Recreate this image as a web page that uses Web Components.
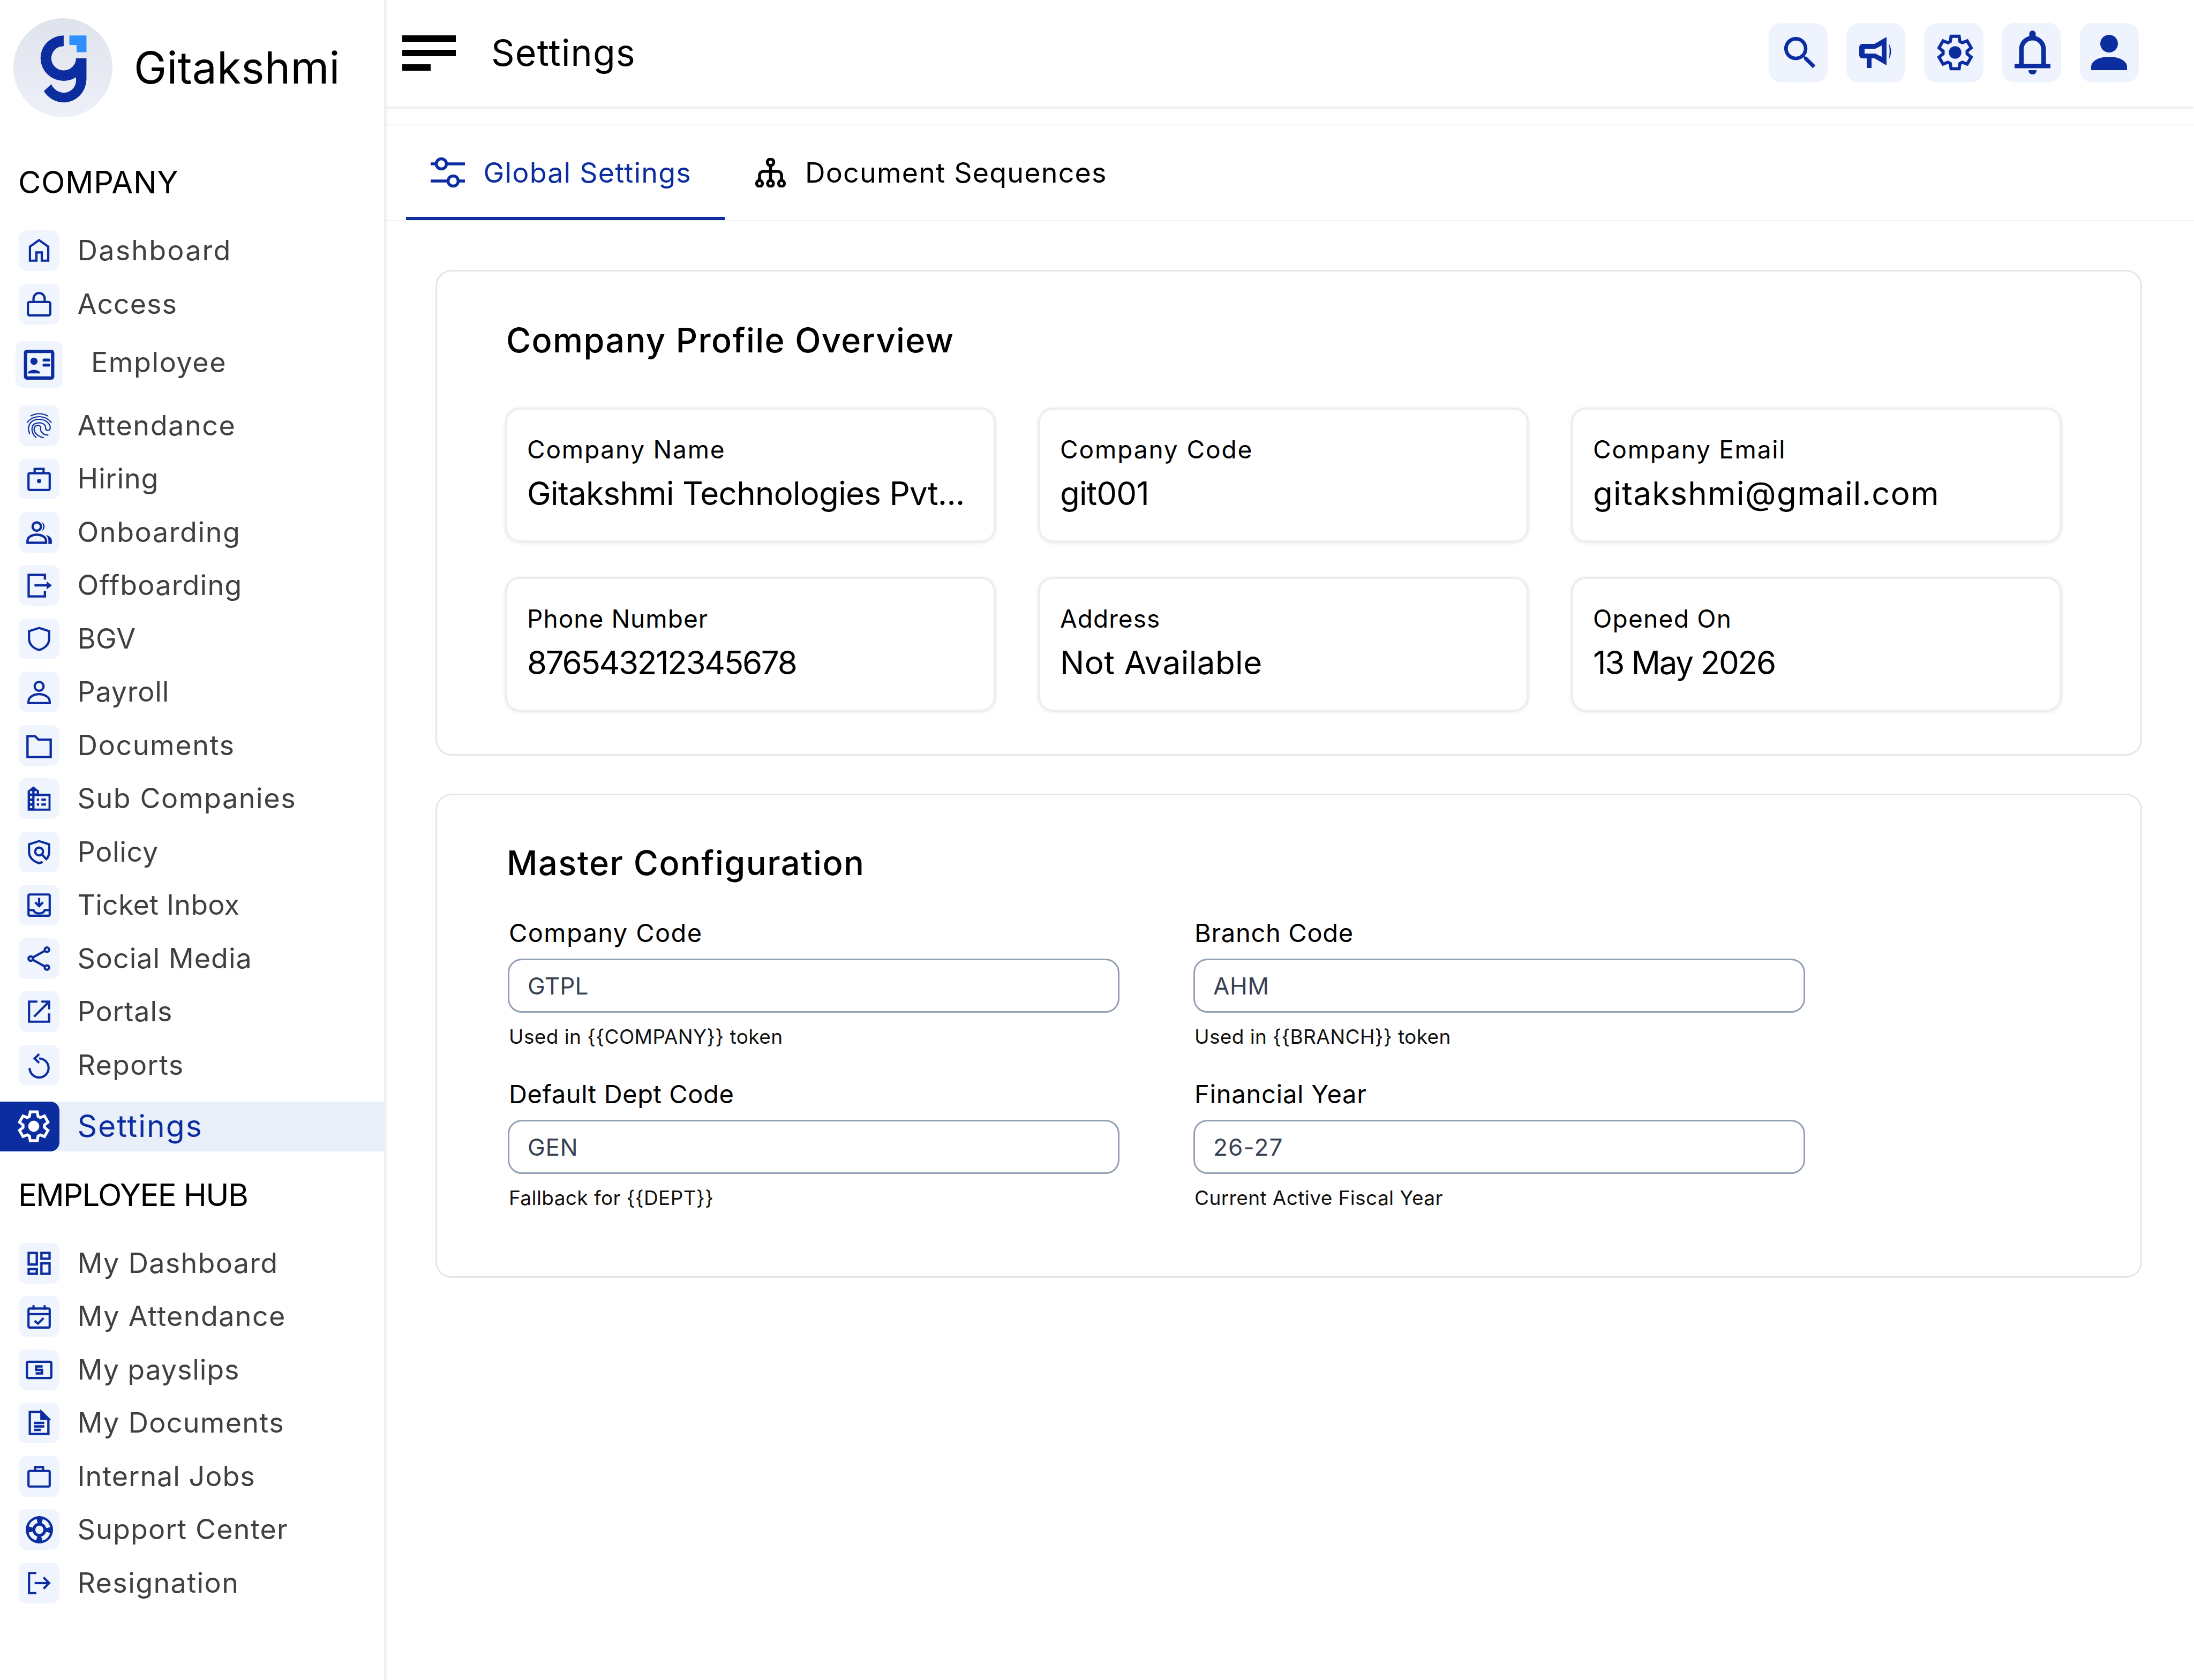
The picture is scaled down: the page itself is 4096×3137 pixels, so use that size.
<!DOCTYPE html>
<html lang="en">
<head>
<meta charset="utf-8">
<title>Settings</title>
<style>
  html, body { margin: 0; height: 100%; background: #fff; overflow: hidden; }
  body { font-family: Inter, "Liberation Sans", sans-serif; color: #000; }
</style>
</head>
<body>
<gt-app>
  <gt-sidebar slot="side">
    <gt-nav-section style="--ls:.6px">COMPANY</gt-nav-section>
    <gt-nav-item icon="home" style="--ls:2.2px">Dashboard</gt-nav-item>
    <gt-nav-item icon="lock" style="--ls:1px">Access</gt-nav-item>
    <gt-nav-item icon="idcard" wide>Employee</gt-nav-item>
    <gt-nav-item icon="fingerprint">Attendance</gt-nav-item>
    <gt-nav-item icon="hiring" style="--ls:.8px">Hiring</gt-nav-item>
    <gt-nav-item icon="people" size="52">Onboarding</gt-nav-item>
    <gt-nav-item icon="offboard" size="52" style="--ls:1.2px">Offboarding</gt-nav-item>
    <gt-nav-item icon="shield" style="--ls:.6px">BGV</gt-nav-item>
    <gt-nav-item icon="person" style="--ls:.8px">Payroll</gt-nav-item>
    <gt-nav-item icon="folder" size="52">Documents</gt-nav-item>
    <gt-nav-item icon="building">Sub Companies</gt-nav-item>
    <gt-nav-item icon="policy" style="--ls:.7px">Policy</gt-nav-item>
    <gt-nav-item icon="inbox" style="--ls:.2px">Ticket Inbox</gt-nav-item>
    <gt-nav-item icon="share" style="--ls:1px">Social Media</gt-nav-item>
    <gt-nav-item icon="external" style="--ls:1px">Portals</gt-nav-item>
    <gt-nav-item icon="undo" style="--ls:1.2px">Reports</gt-nav-item>
    <gt-nav-item icon="gear" active>Settings</gt-nav-item>
    <gt-nav-section style="--ls:-1.6px">EMPLOYEE HUB</gt-nav-section>
    <gt-nav-item icon="grid" size="52" style="--ls:1.3px">My Dashboard</gt-nav-item>
    <gt-nav-item icon="calendar" style="--ls:1.4px">My Attendance</gt-nav-item>
    <gt-nav-item icon="payslip" size="52" style="--ls:.9px">My payslips</gt-nav-item>
    <gt-nav-item icon="doc" size="52" style="--ls:1.3px">My Documents</gt-nav-item>
    <gt-nav-item icon="bag" style="--ls:1px">Internal Jobs</gt-nav-item>
    <gt-nav-item icon="lifebuoy" size="51" style="--ls:1.2px">Support Center</gt-nav-item>
    <gt-nav-item icon="logout" style="--ls:1.4px">Resignation</gt-nav-item>
  </gt-sidebar>

  <gt-topbar>Settings</gt-topbar>
  <gt-tabs></gt-tabs>

  <gt-card heading="Company Profile Overview">
    <gt-tile-grid>
      <gt-info-tile label="Company Name" style="--ls:1.8px;--vls:-.7px">Gitakshmi Technologies Pvt...</gt-info-tile>
      <gt-info-tile label="Company Code" style="--ls:1.9px;--vls:-.9px">git001</gt-info-tile>
      <gt-info-tile label="Company Email" style="--ls:1.75px;--vls:1.3px">gitakshmi@gmail.com</gt-info-tile>
      <gt-info-tile label="Phone Number" style="--ls:1.05px;--vls:-2.3px">876543212345678</gt-info-tile>
      <gt-info-tile label="Address" style="--ls:1.05px;--vls:.5px">Not Available</gt-info-tile>
      <gt-info-tile label="Opened On" style="--ls:1.3px;--vls:-2.2px">13 May 2026</gt-info-tile>
    </gt-tile-grid>
  </gt-card>

  <gt-card heading="Master Configuration" config>
    <gt-field-grid>
      <gt-field label="Company Code" value="GTPL" style="--ls:1.4px;--ils:.2px">Used in {{COMPANY}} token</gt-field>
      <gt-field label="Branch Code" value="AHM" style="--ls:.7px;--ils:.6px">Used in {{BRANCH}} token</gt-field>
      <gt-field label="Default Dept Code" value="GEN" style="--ls:.6px;--ils:.6px">Fallback for {{DEPT}}</gt-field>
      <gt-field label="Financial Year" value="26-27" style="--ls:.8px;--ils:1.2px">Current Active Fiscal Year</gt-field>
    </gt-field-grid>
  </gt-card>
</gt-app>

<script>
const BLUE = "#0b2d9f";

// six flat teeth, drawn as one closed outline round the middle of the 24 box
function gearPath() {
  const pts = [];
  for (let i = 0; i < 6; i++) {
    const t = i * Math.PI / 3;
    for (const [p, a] of [[-3, 6.9], [-2.5, 10.1], [2.5, 10.1], [3, 6.9]]) {
      const x = 12 + a * Math.sin(t) + p * Math.cos(t);
      const y = 12 - a * Math.cos(t) + p * Math.sin(t);
      pts.push(x.toFixed(2) + " " + y.toFixed(2));
    }
  }
  return "M" + pts.join("L") + "Z";
}

const ICONS = {
  home: `<path d="M12 2.6 20.2 8.4V21H14.4V13.6H9.6V21H3.8V8.4Z"/>`,
  lock: `<rect x="2" y="10" width="20" height="12" rx="1.5"/><path d="M7 10V7a5 5 0 0 1 10 0v3"/>`,
  idcard: `<rect x="2.2" y="2.4" width="19.6" height="19.2" rx="1" stroke-width="2.4"/>
    <g fill="currentColor" stroke="none"><circle cx="8.3" cy="9.5" r="2.6"/><path d="M3.8 18.3c0-3.4 9-3.4 9 0z"/>
    <rect x="14.5" y="7.5" width="5.5" height="2.2" rx="1"/><rect x="14.5" y="11.2" width="5.5" height="2.2" rx="1"/></g>`,
  fingerprint: `<g transform="translate(-10.2 -12.3) scale(.1158)" stroke-width="9" stroke-linecap="round">
    <path d="M128 133Q192 100 258 133"/>
    <path d="M100 183C150 125 235 125 285 183"/>
    <path d="M118 272C95 210 125 160 192 160C250 160 278 200 278 225C278 250 245 250 243 235"/>
    <path d="M168 300C125 260 120 190 190 187C230 187 245 210 243 238"/>
    <path d="M225 302C170 290 145 250 155 225C165 200 205 205 205 225C195 250 222 282 260 282"/></g>`,
  hiring: `<rect x="2.5" y="7" width="19" height="15" rx="1"/><path d="M8 7V3.2h8V7"/><circle cx="12" cy="14" r="1.9" fill="currentColor" stroke="none"/>`,
  people: `<circle cx="10" cy="7" r="3.6"/><path d="M2 21v-1.6c0-3.5 4-5.4 8-5.4s8 1.9 8 5.4V21Z"/>
    <path d="M14 3.2a4 4 0 0 1 0 7.6c1-1 1.5-2.4 1.5-3.8S15 4.2 14 3.2z" fill="currentColor" stroke="none"/>
    <path d="M18 14.2c2.5.8 5 2.3 5 5V22h-3v-3c0-2-1-3.5-2-4.8z" fill="currentColor" stroke="none"/>`,
  offboard: `<path d="M17 7V3H3v18.5h14V17"/><path d="M8 12h11"/><path d="M18.5 8.5 23 12l-4.5 3.5z" fill="currentColor" stroke="none"/>`,
  shield: `<path d="M12 2.2 21 5v7c0 5-4 8.5-9 10-5-1.5-9-5-9-10V5Z"/>`,
  person: `<circle cx="12" cy="7" r="4"/><path d="M2.5 22v-1.5c0-4 5-6.5 9.5-6.5s9.5 2.5 9.5 6.5V22Z"/>`,
  folder: `<path d="M2 4h6.5l3 3H22v15H2Z"/>`,
  building: `<g transform="translate(-9.2 -11.9) scale(.114)" stroke="none">
    <path fill="currentColor" d="M96 305V150L141 115 186 150V172H276V305Z"/>
    <g fill="var(--tile)"><rect x="114" y="152" width="18" height="18"/><rect x="150" y="152" width="18" height="18"/><rect x="114" y="191" width="18" height="18"/><rect x="114" y="229" width="18" height="18"/><rect x="114" y="267" width="18" height="18"/><rect x="150" y="191" width="110" height="98"/></g>
    <g fill="currentColor"><rect x="168" y="210" width="18" height="18"/><rect x="204" y="210" width="36" height="18"/><rect x="168" y="248" width="18" height="18"/><rect x="204" y="248" width="36" height="18"/></g></g>`,
  policy: `<path d="M18.8 18.2C20.2 16.4 21 14.3 21 12V5l-9-2.8L3 5v7c0 5 4 8.5 9 10 1-.3 2-.7 3-1.3"/><circle cx="12" cy="11.5" r="3.5"/><path d="M14.5 14 19 19"/>`,
  inbox: `<rect x="2.5" y="2.5" width="19" height="19" rx="1"/><path d="M12 5.5v7"/><path d="M8.5 9.5 12 13l3.5-3.5"/><path d="M3 16.5h4c.6 2 2.6 3 5 3s4.4-1 5-3h4"/>`,
  share: `<circle cx="4.5" cy="12" r="2"/><circle cx="19" cy="4" r="2"/><circle cx="19" cy="20" r="2"/><path d="M6.3 11 17.2 5M6.3 13 17.2 19"/>`,
  external: `<path d="M10.5 3H3v18h18v-7.5"/><path d="M14 3h7v7"/><path d="M7.5 16.5 20.5 3.5"/>`,
  undo: `<path d="M12 6a8.5 8.5 0 1 1-8.5 8.5"/><path d="M12 2 8 6l4 4"/>`,
  gear: `<path stroke-width="1.95" d="${gearPath()}"/><circle cx="12" cy="12" r="3.9" fill="currentColor" stroke="none"/>`,
  grid: `<rect x="3" y="3" width="7" height="10"/><rect x="14" y="3" width="7" height="5"/><rect x="14" y="12" width="7" height="9"/><rect x="3" y="17" width="7" height="4"/>`,
  calendar: `<rect x="2.5" y="5" width="19" height="17" rx="1"/><path d="M2.5 10h19M7 2v4M17 2v4"/><path d="M8 16l3 2.5 5-5"/>`,
  payslip: `<rect x="1.5" y="5" width="21" height="14" rx="1"/><path d="M15 9H9.5v3h5v3H9"/>`,
  doc: `<path d="M4 2.5h10L20 8.5V21.5H4Z"/><path d="M14 2.5V8.5H20Z" fill="currentColor"/><path d="M7.5 12h9M7.5 15h9M7.5 18h6"/>`,
  bag: `<rect x="2.5" y="7" width="19" height="14" rx="1"/><path d="M8.5 7V3.5h7V7"/>`,
  lifebuoy: `<circle cx="12" cy="12" r="12" fill="currentColor" stroke="none"/><circle cx="12" cy="12" r="8" stroke="var(--tile)" stroke-width="3.7" stroke-dasharray="8 4.57" stroke-dashoffset="-2.3"/><circle cx="12" cy="12" r="3.6" fill="var(--tile)" stroke="none"/>`,
  logout: `<path d="M9.5 3H3v18h6.5"/><path d="M8 12h13"/><path d="M16 7l5 5-5 5"/>`
};

class GtIcon extends HTMLElement {
  constructor() {
    super();
    this.attachShadow({ mode: "open" });
  }
  connectedCallback() {
    const size = this.getAttribute("size") || 50;
    this.shadowRoot.innerHTML = `
      <style>:host { display: flex; width: ${size}px; height: ${size}px; } svg { width: 100%; height: 100%; }</style>
      <svg viewBox="0 0 24 24" fill="none" stroke="currentColor" stroke-width="2">${ICONS[this.getAttribute("name")]}</svg>`;
  }
}

class GtApp extends HTMLElement {
  constructor() {
    super();
    this.attachShadow({ mode: "open" });
    this.shadowRoot.innerHTML = `
      <style>
        :host { display: flex; height: 3137px; width: 4096px; }
        main { flex: 1; min-width: 0; display: flex; flex-direction: column; }
        .content { padding: 91px 97px 0 93px; display: flex; flex-direction: column; gap: 71px; }
      </style>
      <slot name="side"></slot>
      <main>
        <slot name="top"></slot>
        <div class="content"><slot></slot></div>
      </main>`;
  }
  connectedCallback() {
    for (const el of this.querySelectorAll("gt-topbar, gt-tabs")) el.slot = "top";
  }
}

class GtSidebar extends HTMLElement {
  constructor() {
    super();
    this.attachShadow({ mode: "open" });
    this.shadowRoot.innerHTML = `
      <style>
        :host { display: flex; flex-direction: column; flex: none; padding-top: 34px; box-sizing: border-box; width: 720px;
          border-right: 3px solid #eeeff1; box-shadow: 2px 0 5px rgba(0,0,0,.05); background: #fff; position: relative; z-index: 2; }
        .brand { display: flex; align-items: center; gap: 40px; padding-left: 25px; margin-bottom: 91px; }
        .logo { width: 185px; height: 185px; border-radius: 50%; background: linear-gradient(#dfe3ec, #eef0f8); flex: none; }
        .logo svg { width: 100%; height: 100%; display: block; }
        .name { font-size: 82px; line-height: 100px; letter-spacing: .2px; }
      </style>
      <div class="brand">
        <div class="logo">
          <svg viewBox="55 75 400 408" preserveAspectRatio="none">
            <path fill="#0b2d9f" d="M258 146V190A50 50 0 1 0 308 240H350V325A92 97 0 0 1 258 422A95 95 0 0 1 178 375L208 347A58 58 0 0 0 258 382A50 50 0 0 0 308 332V318A92 92 0 0 1 258 333A93 93 0 0 1 258 146Z"/>
            <path fill="#2f8fff" d="M281 146H350V215H310V185H281Z"/>
          </svg>
        </div>
        <span class="name">Gitakshmi</span>
      </div>
      <slot></slot>`;
  }
}

class GtNavSection extends HTMLElement {
  constructor() {
    super();
    this.attachShadow({ mode: "open" });
    this.shadowRoot.innerHTML = `
      <style>
        :host { display: block; padding-left: 34px; font-size: 58px; line-height: 60px; margin-bottom: 60px; color: #000; letter-spacing: var(--ls, 0); }
        :host(:not(:first-child)) { margin-top: 51px; }
      </style>
      <slot></slot>`;
  }
}

class GtNavItem extends HTMLElement {
  constructor() {
    super();
    this.attachShadow({ mode: "open" });
  }
  connectedCallback() {
    const icon = this.getAttribute("icon");
    const wide = this.hasAttribute("wide");
    const active = this.hasAttribute("active");
    const size = this.getAttribute("size") || (wide ? 62 : active ? 64 : 50);
    this.shadowRoot.innerHTML = `
      <style>
        :host { display: flex; align-items: center; gap: 33.5px; padding-left: 35px; margin-bottom: 23.5px; --tile: #eff4fd; color: #404040;
          font-size: 52px; letter-spacing: var(--ls, 1.6px); line-height: 76px; }
        .tile { width: 76px; height: 76px; border-radius: 15px; background: var(--tile); color: ${BLUE}; display: flex; align-items: center; justify-content: center; flex: none; }
        :host([wide]) { padding-left: 29px; gap: 53px; margin-top: 8px; margin-bottom: 31.5px; }
        :host([wide]) .tile { width: 88px; height: 88px; }
        :host([wide]) .label { padding-bottom: 9px; }
        :host([active]) { padding-left: 0; height: 93px; background: #e8eff9; color: ${BLUE}; font-size: 57px; letter-spacing: 2px;
          margin-top: 6.5px; margin-bottom: 0; }
        :host([active]) .tile { width: 111px; height: 93px; border-radius: 0 17px 17px 0; background: ${BLUE}; color: #fff; --tile: ${BLUE}; justify-content: flex-start; padding-left: 31px; box-sizing: border-box; }
      </style>
      <div class="tile"><gt-icon name="${icon}" size="${size}"></gt-icon></div>
      <span class="label"><slot></slot></span>`;
  }
}

class GtTopbar extends HTMLElement {
  constructor() {
    super();
    this.attachShadow({ mode: "open" });
    this.shadowRoot.innerHTML = `
      <style>
        :host { display: flex; align-items: center; height: 199px; padding: 0 103px 3px 31px; box-sizing: border-box; background: #fff;
          box-shadow: 0 2px 6px rgba(0,0,0,.12); position: relative; flex: none; }
        .burger { display: flex; flex-direction: column; gap: 15px; width: 100px; margin-right: 66px; margin-top: 2px; }
        .burger i { display: block; height: 12px; background: #000; }
        .burger i:last-child { width: 53px; }
        h1 { font-size: 68px; font-weight: 400; margin: 0; letter-spacing: 1.2px; line-height: 80px; flex: 1; }
        .actions { display: flex; gap: 34.7px; }
        .btn { width: 110.5px; height: 111px; border-radius: 24px; background: #eef3fd; display: flex; align-items: center; justify-content: center; color: ${BLUE}; }
        svg { display: block; fill: currentColor; }
      </style>
      <div class="burger"><i></i><i></i><i></i></div>
      <h1><slot></slot></h1>
      <div class="actions">
        <div class="btn">
          <svg width="80" height="80" viewBox="0 0 24 24" style="transform:translate(4px,1px)"><path d="M15.5 14h-.79l-.28-.27C15.41 12.59 16 11.11 16 9.5 16 5.91 13.09 3 9.5 3S3 5.91 3 9.5 5.91 16 9.5 16c1.61 0 3.09-.59 4.23-1.57l.27.28v.79l5 4.99L20.49 19l-4.99-5zm-6 0C7.01 14 5 11.99 5 9.5S7.01 5 9.5 5 14 7.01 14 9.5 11.99 14 9.5 14z"/></svg>
        </div>
        <div class="btn">
          <svg width="63" height="58" viewBox="0 0 63 58">
            <path fill-rule="evenodd" d="M6 13H28.6L51 0V53L28.6 40H6C2 40 0 37 0 33V20C0 16 2 13 6 13ZM10 22V31H30L42 37V16L30 22Z"/>
            <rect x="14" y="40" width="9" height="18"/>
            <path d="M55 12Q64 27 55 42Q58.5 27 55 12Z"/>
          </svg>
        </div>
        <div class="btn"><gt-icon name="gear" size="72" style="transform:translate(3px,0)"></gt-icon></div>
        <div class="btn">
          <svg width="67" height="82" viewBox="0 0 67 82" style="transform:translate(2px,0)">
            <path d="M33.5 0C37 0 39.5 3 39.5 6V10.5C49 13 58.5 21 58.5 36V62H50V36C50 25 43 18.5 33.5 18.5S17 25 17 36V62H8.5V36C8.5 21 18 13 27.5 10.5V6C27.5 3 30 0 33.5 0Z"/>
            <rect y="62" width="67" height="8.4"/>
            <path d="M26 74H41C41 79 38 82 33.5 82S26 79 26 74Z"/>
          </svg>
        </div>
        <div class="btn">
          <svg width="67" height="66" viewBox="0 0 67 66">
            <circle cx="33.5" cy="16.5" r="16.5"/>
            <path d="M0 66V60C0 48 16 41 33.5 41S67 48 67 60V66Z"/>
          </svg>
        </div>
      </div>`;
  }
}

class GtTabs extends HTMLElement {
  constructor() {
    super();
    this.attachShadow({ mode: "open" });
    this.shadowRoot.innerHTML = `
      <style>
        :host { display: flex; align-items: stretch; height: 181px; margin-top: 33px; padding-left: 38px; flex: none; box-sizing: border-box;
          border-top: 2px solid #f6f6f6; border-bottom: 2px solid #f3f3f3; background: #fff; font-size: 52px; letter-spacing: 1.2px; white-space: nowrap; }
        .tab { display: flex; align-items: center; gap: 35px; padding: 5px 0 0 45.5px; box-sizing: border-box; color: #000; height: 100%; }
        .tab.on { color: ${BLUE}; width: 595px; border-bottom: 6px solid ${BLUE}; }
        .tab + .tab { padding-left: 56px; padding-bottom: 6px; }
        svg { display: block; flex: none; fill: none; stroke: currentColor; stroke-width: 5.5; }
      </style>
      <div class="tab on">
        <svg width="64" height="60" viewBox="0 0 64 60"><path d="M0 14H10M30 14H64M0 46H32M52 46H64"/><circle cx="20" cy="14" r="9.5"/><circle cx="42" cy="46" r="9.5"/></svg>
        <span>Global Settings</span>
      </div>
      <div class="tab">
        <svg width="59" height="55" viewBox="0 0 59 55" stroke-width="5"><circle cx="29.5" cy="8" r="6"/><path d="M29.5 14V42M9 42V32a7 7 0 0 1 7-7H43a7 7 0 0 1 7 7V42"/><circle cx="9" cy="47.5" r="5.5"/><circle cx="29.5" cy="47.5" r="5.5"/><circle cx="50" cy="47.5" r="5.5"/></svg>
        <span>Document Sequences</span>
      </div>`;
  }
}

class GtCard extends HTMLElement {
  constructor() {
    super();
    this.attachShadow({ mode: "open" });
  }
  connectedCallback() {
    this.shadowRoot.innerHTML = `
      <style>
        :host { display: block; border: 3px solid #e5e6e8; border-radius: 30px; background: #fff; padding: 90px 148px 79px 127px; }
        :host([config]) { padding: 88px 148px 124px 129px; }
        h2 { margin: 0 0 88px 2px; font-size: 63px; line-height: 76px; font-weight: 500; letter-spacing: 1.4px; }
        :host([config]) h2 { margin: 0 0 65px 1px; letter-spacing: 1.5px; }
      </style>
      <h2>${this.getAttribute("heading")}</h2>
      <slot></slot>`;
  }
}

class GtTileGrid extends HTMLElement {
  constructor() {
    super();
    this.attachShadow({ mode: "open" });
    this.shadowRoot.innerHTML = `
      <style>:host { display: grid; grid-template-columns: repeat(3, 916px); column-gap: 79px; row-gap: 64px; }</style>
      <slot></slot>`;
  }
}

class GtInfoTile extends HTMLElement {
  constructor() {
    super();
    this.attachShadow({ mode: "open" });
  }
  connectedCallback() {
    this.shadowRoot.innerHTML = `
      <style>
        :host { display: block; height: 252px; box-sizing: border-box; border: 4px solid #eeeeee; border-radius: 28px; background: #fff;
          box-shadow: 0 1px 6px rgba(0,0,0,.09); padding: 46px 20px 0 37px; }
        .label { font-size: 46px; line-height: 56px; letter-spacing: var(--ls, 1.6px); }
        .value { font-size: 60px; line-height: 70px; margin-top: 19px; letter-spacing: var(--vls, 1.3px); white-space: nowrap; }
      </style>
      <div class="label">${this.getAttribute("label")}</div>
      <div class="value"><slot></slot></div>`;
  }
}

class GtFieldGrid extends HTMLElement {
  constructor() {
    super();
    this.attachShadow({ mode: "open" });
    this.shadowRoot.innerHTML = `
      <style>:host { display: grid; grid-template-columns: repeat(2, 1142px); column-gap: 138px; row-gap: 57px; margin-left: 3px; }</style>
      <slot></slot>`;
  }
}

class GtField extends HTMLElement {
  constructor() {
    super();
    this.attachShadow({ mode: "open" });
  }
  connectedCallback() {
    this.shadowRoot.innerHTML = `
      <style>
        :host { display: block; }
        .label { font-size: 47px; line-height: 56px; letter-spacing: var(--ls, 1px); padding-left: 2px; margin-bottom: 20px; }
        .input { height: 101px; box-sizing: border-box; border: 3px solid #94a0b4; border-radius: 26px; padding-left: 34px; display: flex; align-items: center;
          font-size: 44px; letter-spacing: var(--ils, .5px); color: #374151; background: #fff; }
        .help { font-size: 37px; line-height: 44px; margin-top: 23px; padding-left: 2px; letter-spacing: .4px; color: #111; }
      </style>
      <div class="label">${this.getAttribute("label")}</div>
      <div class="input">${this.getAttribute("value")}</div>
      <div class="help"><slot></slot></div>`;
  }
}

customElements.define("gt-icon", GtIcon);
customElements.define("gt-app", GtApp);
customElements.define("gt-sidebar", GtSidebar);
customElements.define("gt-nav-section", GtNavSection);
customElements.define("gt-nav-item", GtNavItem);
customElements.define("gt-topbar", GtTopbar);
customElements.define("gt-tabs", GtTabs);
customElements.define("gt-card", GtCard);
customElements.define("gt-tile-grid", GtTileGrid);
customElements.define("gt-info-tile", GtInfoTile);
customElements.define("gt-field-grid", GtFieldGrid);
customElements.define("gt-field", GtField);
</script>
</body>
</html>
